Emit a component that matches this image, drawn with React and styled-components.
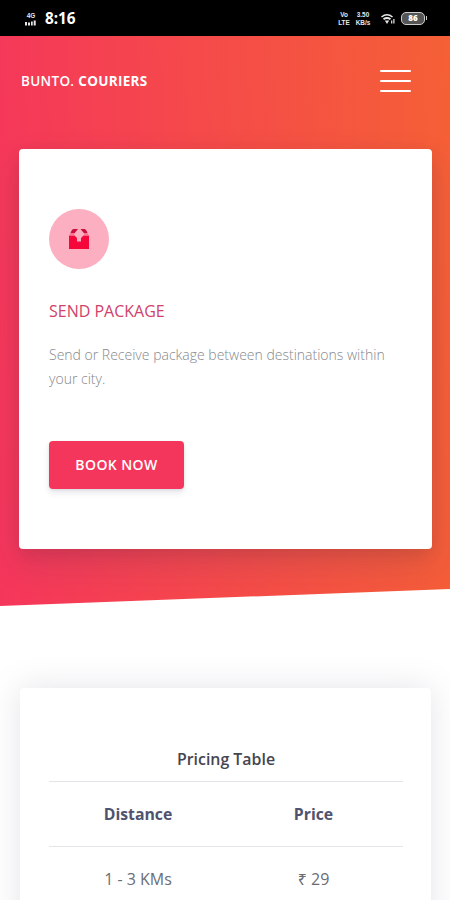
import React from "react";
import styled, { createGlobalStyle } from "styled-components";

const GlobalStyle = createGlobalStyle`
  * {
    box-sizing: border-box;
  }
  body {
    margin: 0;
    background: #fff;
    font-family: "Open Sans", "Noto Sans", sans-serif;
    color: #525f7f;
  }
`;

const Screen = styled.div`
  height: 900px;
  overflow: hidden;
`;

const StatusBar = styled.div`
  display: flex;
  align-items: center;
  justify-content: space-between;
  height: 36px;
  padding: 1px 25px 0 25px;
  background: #000;
  color: #fff;
`;

const StatusGroup = styled.div`
  display: flex;
  align-items: center;
  gap: ${({ $gap }) => $gap}px;
`;

const Stack = styled.div`
  display: flex;
  flex-direction: column;
  align-items: center;
  width: ${({ $width }) => $width}px;
  color: #e8e8e8;
  font-family: "Liberation Sans", sans-serif;
  font-size: 6.4px;
  font-weight: 700;
  line-height: 8px;
  white-space: nowrap;
`;

const Clock = styled.div`
  font-family: "Noto Sans", sans-serif;
  font-size: 15.3px;
  font-weight: 700;
  line-height: 20px;
  margin-top: -1px;
`;

const Battery = styled.div`
  position: relative;
  width: 24px;
  height: 13px;
  border: 1.5px solid #ccc;
  border-radius: 5px;
  background: #555;
  font-size: 8px;
  font-weight: 800;
  line-height: 10px;
  text-align: center;
  &::after {
    content: "";
    position: absolute;
    right: -3px;
    top: 3px;
    width: 1.5px;
    height: 4px;
    background: #ccc;
  }
`;

const Hero = styled.section`
  height: 570px;
  padding: 0 18px 0 19px;
  background: linear-gradient(87deg, #f5365c 0%, #f56036 100%);
  clip-path: polygon(0 0, 100% 0, 100% 553px, 0 570px);
`;

const Navbar = styled.nav`
  display: flex;
  align-items: center;
  justify-content: space-between;
  height: 113px;
  padding: 0 21px 24px 2px;
`;

const Brand = styled.a`
  color: #fff;
  font-size: 13.5px;
  font-weight: 600;
  line-height: 20px;
  letter-spacing: 0.32px;
  strong {
    font-weight: 700;
  }
`;

const Toggler = styled.button`
  display: flex;
  flex-direction: column;
  gap: 8px;
  padding: 0;
  border: 0;
  background: none;
  span {
    width: 31px;
    height: 2px;
    border-radius: 1px;
    background: #fff;
  }
`;

const Card = styled.div`
  border-radius: 4px;
  background: #fff;
`;

const ServiceCard = styled(Card)`
  height: 400px;
  padding: 60px 30px;
  box-shadow: 0 15px 35px rgba(50, 50, 93, 0.15), 0 5px 15px rgba(0, 0, 0, 0.08);
`;

const IconCircle = styled.div`
  display: flex;
  align-items: center;
  justify-content: center;
  width: 60px;
  height: 60px;
  border-radius: 50%;
  background: #fcafc0;
`;

const ServiceTitle = styled.h6`
  margin: 30px 0 0;
  color: #d0426a;
  font-size: 16px;
  font-weight: 400;
  line-height: 24px;
`;

const Description = styled.p`
  margin: 20px 0 0;
  color: #85888d;
  font-size: 14px;
  font-weight: 300;
  line-height: 24px;
`;

const BookButton = styled.button`
  display: block;
  width: 135px;
  height: 48px;
  margin: 50px 0 0;
  padding: 0;
  border: 0;
  border-radius: 4px;
  background: #f5365c;
  color: #fff;
  font: 600 14px/20px "Open Sans", sans-serif;
  letter-spacing: 0.4px;
  box-shadow: 0 4px 6px rgba(50, 50, 93, 0.11), 0 1px 3px rgba(0, 0, 0, 0.08);
`;

const PricingCard = styled(Card)`
  margin: 82px 19px 0 20px;
  height: 300px;
  padding: 57px 28px 0 29px;
  box-shadow: 0 0 32px rgba(100, 105, 125, 0.18);
`;

const PricingTitle = styled.h5`
  height: 36px;
  margin: 0;
  color: #45454f;
  font-size: 15.9px;
  font-weight: 600;
  line-height: 28px;
  text-align: center;
`;

const PricingTable = styled.table`
  width: 100%;
  border-collapse: collapse;
  table-layout: fixed;
  th,
  td {
    height: 65px;
    padding: 0 2px 0 0;
    border-top: 1px solid #e4e5e8;
    color: #6b6d75;
    font-size: 16px;
    font-weight: 400;
    text-align: center;
  }
  th {
    color: #50536e;
    font-weight: 700;
    font-size: 15.8px;
  }
  th:first-child,
  td:first-child {
    padding: 0 0 0 1px;
  }
`;

const prices = [{ distance: "1 - 3 KMs", price: "₹ 29" }];

function BoxIcon() {
  return (
    <svg width="20" height="20" viewBox="0 0 20 20">
      <path d="M0 6.500h5.500L8 9v3.500h4V9l2.500-2.500H20V20H0z" fill="#f5073c" />
      <path d="M4.500 0H9L5.500 4.300H1.500C2 2 3 .6 4.500 0z" fill="#c90f3c" />
      <path d="M11.500 0h4c1.500.6 2.500 2 3 4.300h-3.500z" fill="#c90f3c" />
      <path d="M1.500 4.300h4L5 6.500H0zM18.500 4.300h-3.500l.5 2.200H20z" fill="#f77393" />
    </svg>
  );
}

function SignalIcon() {
  return (
    <svg width="12" height="6" viewBox="0 0 12 6" fill="#e8e8e8">
      <path d="M0 2h2v3.500H0zM3 2.500h2v3H3zM6 1.500h1.700v4H6zM8.700 0.500h2v5h-2z" />
    </svg>
  );
}

function WifiIcon() {
  return (
    <svg width="14" height="12" viewBox="0 0 14 12" fill="none" stroke="#e8e8e8">
      <path d="M0.500 4Q6 -0.500 11.500 4" strokeWidth="1.6" />
      <path d="M2.500 6.300Q6 3.700 9.500 6.300" strokeWidth="1.8" />
      <path d="M3.800 7.500h4.400L6 11z" fill="#e8e8e8" stroke="none" />
      <path d="M10.700 7.500v3M12.900 6v4.500" strokeWidth="1.200" />
    </svg>
  );
}

function App() {
  return (
    <>
      <GlobalStyle />
      <Screen>
        <StatusBar>
          <StatusGroup $gap={8}>
            <Stack $width={12}>
              <span>4G</span>
              <SignalIcon />
            </Stack>
            <Clock>8:16</Clock>
          </StatusGroup>
          <StatusGroup $gap={10}>
            <StatusGroup $gap={5}>
              <Stack $width={12}>
                <span>Vo</span>
                <span>LTE</span>
              </Stack>
              <Stack $width={16}>
                <span>3.50</span>
                <span>KB/s</span>
              </Stack>
            </StatusGroup>
            <StatusGroup $gap={6}>
              <WifiIcon />
              <Battery>86</Battery>
            </StatusGroup>
          </StatusGroup>
        </StatusBar>
        <Hero>
          <Navbar>
            <Brand>
              BUNTO. <strong>COURIERS</strong>
            </Brand>
            <Toggler aria-label="Menu">
              <span />
              <span />
              <span />
            </Toggler>
          </Navbar>
          <ServiceCard>
            <IconCircle>
              <BoxIcon />
            </IconCircle>
            <ServiceTitle>SEND PACKAGE</ServiceTitle>
            <Description>
              Send or Receive package between destinations within your city.
            </Description>
            <BookButton>BOOK NOW</BookButton>
          </ServiceCard>
        </Hero>
        <PricingCard>
          <PricingTitle>Pricing Table</PricingTitle>
          <PricingTable>
            <thead>
              <tr>
                <th>Distance</th>
                <th>Price</th>
              </tr>
            </thead>
            <tbody>
              {prices.map((row) => (
                <tr key={row.distance}>
                  <td>{row.distance}</td>
                  <td>{row.price}</td>
                </tr>
              ))}
            </tbody>
          </PricingTable>
        </PricingCard>
      </Screen>
    </>
  );
}

export default App;
